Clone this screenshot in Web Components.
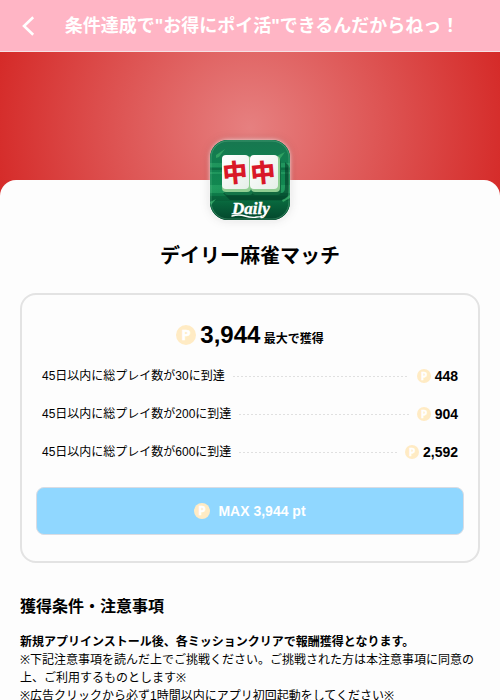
<!DOCTYPE html>
<html lang="ja">
<head>
<meta charset="UTF-8">
<meta name="viewport" content="width=device-width, initial-scale=1">
<title>デイリー麻雀マッチ</title>
<style>
  body {
    margin: 0;
    background: #fdfdfd;
    color: #000;
    font-family: "Liberation Sans", "Noto Sans", "Open Sans", "Noto Sans CJK JP", sans-serif;
    font-size: 12px;
    line-height: 18px;
  }
</style>
</head>
<body>
<offer-page>
  <app-bar slot="bar">条件達成で"お得にポイ活"できるんだからねっ！</app-bar>
  <app-icon slot="icon"></app-icon>
  <span slot="name">デイリー麻雀マッチ</span>
  <reward-card total="3,944">
    <reward-row points="448">45日以内に総プレイ数が30に到達</reward-row>
    <reward-row points="904">45日以内に総プレイ数が200に到達</reward-row>
    <reward-row points="2,592">45日以内に総プレイ数が600に到達</reward-row>
  </reward-card>
  <offer-notes heading="獲得条件・注意事項">
    <strong>新規アプリインストール後、各ミッションクリアで報酬獲得となります。</strong><br>
    ※下記注意事項を読んだ上でご挑戦ください。ご挑戦された方は本注意事項に同意の上、ご利用するものとします※<br>
    ※広告クリックから必ず1時間以内にアプリ初回起動をしてください※
  </offer-notes>
</offer-page>

<script>
class OfferPage extends HTMLElement {
  constructor() {
    super();
    this.attachShadow({ mode: "open" });
  }

  connectedCallback() {
    this.shadowRoot.innerHTML = `
      <style>
        :host { display: block; }
        .hero {
          height: 152px;
          background: radial-gradient(circle, #e68080, #d52a28);
        }
        main {
          display: flex;
          flex-direction: column;
          position: relative;
          margin-top: -24px;
          padding: 0 20px 20px;
          border-radius: 16px 16px 0 0;
          background: #fdfdfd;
        }
        ::slotted(app-icon) {
          align-self: center;
          margin-top: -41px;
        }
        h1 {
          margin: 20px 0 22px;
          font-size: 20px;
          line-height: 30px;
          text-align: center;
        }
      </style>
      <slot name="bar"></slot>
      <div class="hero"></div>
      <main>
        <slot name="icon"></slot>
        <h1><slot name="name"></slot></h1>
        <slot></slot>
      </main>
    `;
  }
}
customElements.define("offer-page", OfferPage);

class AppBar extends HTMLElement {
  constructor() {
    super();
    this.attachShadow({ mode: "open" });
  }

  connectedCallback() {
    this.shadowRoot.innerHTML = `
      <style>
        :host { display: block; }
        header {
          display: grid;
          grid-template-columns: 56px 1fr 32px;
          align-items: center;
          height: 51px;
          border-bottom: 1px solid #f5e1e5;
          background: #ffb5c5;
          color: #fff;
        }
        button {
          display: flex;
          justify-content: center;
          align-items: center;
          height: 51px;
          padding: 0;
          border: 0;
          background: none;
          color: inherit;
          cursor: pointer;
        }
        h2 {
          margin: 0;
          font-size: 18px;
          line-height: 26px;
          text-align: center;
          white-space: nowrap;
        }
      </style>
      <header>
        <button type="button" aria-label="戻る">
          <svg width="14" height="20" viewBox="0 0 14 20" fill="none" stroke="currentColor" stroke-width="2.6">
            <path d="M12.2 1.2 3 10l9.2 8.8"/>
          </svg>
        </button>
        <h2><slot></slot></h2>
      </header>
    `;
  }
}
customElements.define("app-bar", AppBar);

class AppIcon extends HTMLElement {
  constructor() {
    super();
    this.attachShadow({ mode: "open" });
  }

  connectedCallback() {
    this.shadowRoot.innerHTML = `
      <style>
        :host { display: block; width: 80px; height: 82px; }
        svg { display: block; overflow: visible; }
        .glow { filter: drop-shadow(0 0 2px #ffffffcc) drop-shadow(0 0 4px #00000022); }
        .tile { font: 900 25px "Noto Sans CJK JP", sans-serif; }
        .logo { font: italic bold 17px "Liberation Serif", serif; }
      </style>
      <svg width="80" height="82" viewBox="0 0 80 82">
        <defs>
          <linearGradient id="felt" x1="0" y1="0" x2="0" y2="1">
            <stop offset="0" stop-color="#187650"/>
            <stop offset=".3" stop-color="#11804f"/>
            <stop offset=".6" stop-color="#128951"/>
            <stop offset=".78" stop-color="#08653c"/>
            <stop offset="1" stop-color="#03452b"/>
          </linearGradient>
          <linearGradient id="streak">
            <stop offset="0" stop-color="#38b873"/>
            <stop offset=".5" stop-color="#22965f"/>
            <stop offset="1" stop-color="#3ab977"/>
          </linearGradient>
          <linearGradient id="face" x1="0" y1="0" x2="1" y2="1">
            <stop offset="0" stop-color="#fff"/>
            <stop offset="1" stop-color="#e5efe8"/>
          </linearGradient>
          <clipPath id="shape"><rect y="1" width="80" height="80" rx="18"/></clipPath>
        </defs>
        <rect class="glow" y="1" width="80" height="80" rx="18" fill="#08653c"/>
        <g clip-path="url(#shape)">
          <rect width="80" height="82" fill="url(#felt)"/>
          <path fill="url(#streak)" opacity=".4" d="M0 24h80v4H0zM0 33h80v2H0zM0 46h80v8H0z"/>
          <path fill="#04502f" opacity=".4" d="M0 29h80v2H0zM0 57h80v5H0z"/>
          <path fill="#2fa061" d="M6 16l9-6-6 8-3 1zM67 17l8-4-5 7zM0 63l6-3-5 6zM72 61l8-5v3l-7 4z"/>
          <path d="M13 54h58q4 0 4-6V23l4 4v23q0 11-8 11H20z" fill="#023c26" opacity=".6"/>
          <rect x="14" y="20" width="29" height="36" rx="4" fill="#147548"/>
          <rect x="42" y="20" width="29" height="36" rx="4" fill="#11683f"/>
          <rect x="12" y="17" width="29" height="36" rx="4" fill="#91ce93"/>
          <rect x="41" y="17" width="29" height="36" rx="4" fill="#91ce93"/>
          <rect x="12" y="16" width="27" height="34" rx="4" fill="url(#face)"/>
          <rect x="40" y="16" width="28" height="34" rx="4" fill="url(#face)"/>
          <g class="tile" fill="#d91827" text-anchor="middle">
            <text x="25" y="43" transform="rotate(-5 25 34)">中</text>
            <text x="53" y="43" transform="rotate(-5 53 34)">中</text>
          </g>
          <text class="logo" x="22" y="75" fill="#fff" stroke="#fff" stroke-width=".4">Daily</text>
          <path d="M22 77q7-2 13 0t12 1q7 0 9-4" fill="none" stroke="#fff" stroke-width="1.4" stroke-linecap="round"/>
        </g>
        <rect x="1" y="2" width="78" height="78" rx="17" fill="none" stroke="#72c397" stroke-opacity=".4"/>
      </svg>
    `;
  }
}
customElements.define("app-icon", AppIcon);

class PointCoin extends HTMLElement {
  constructor() {
    super();
    this.attachShadow({ mode: "open" });
  }

  connectedCallback() {
    this.shadowRoot.innerHTML = `
      <style>
        :host { display: block; flex: none; width: 14px; height: 14px; }
        svg { display: block; width: 100%; height: 100%; }
        text { font: bold 15px "Open Sans", sans-serif; }
      </style>
      <svg viewBox="0 0 20 20">
        <circle cx="10" cy="10" r="10" fill="#ffebc4"/>
        <text x="10" y="15" fill="#fff" stroke="#fff" stroke-width=".5" text-anchor="middle">P</text>
      </svg>
    `;
  }
}
customElements.define("point-coin", PointCoin);

class RewardCard extends HTMLElement {
  constructor() {
    super();
    this.attachShadow({ mode: "open" });
  }

  connectedCallback() {
    const total = this.getAttribute("total");

    this.shadowRoot.innerHTML = `
      <style>
        :host {
          display: block;
          padding: 22px 14px 26px;
          border: 2px solid #e3e3e3;
          border-radius: 16px;
        }
        .total {
          display: flex;
          justify-content: center;
          align-items: center;
          gap: 4px;
          height: 36px;
        }
        .total point-coin { width: 20px; height: 20px; }
        .total p { margin: 4px 0 0; font-weight: bold; line-height: 36px; }
        .total b { font-size: 24px; }
        .rows {
          display: grid;
          gap: 20px;
          padding: 14px 6px 26px;
        }
        button {
          display: flex;
          justify-content: center;
          align-items: center;
          gap: 8px;
          width: 100%;
          height: 48px;
          border: 1px solid #d9dce3;
          border-radius: 8px;
          background: #90d7ff;
          color: #fff;
          font: bold 14px "Liberation Sans", sans-serif;
          cursor: pointer;
        }
        button point-coin { width: 16px; height: 16px; }
      </style>
      <div class="total">
        <point-coin></point-coin>
        <p><b>${total}</b> 最大で獲得</p>
      </div>
      <div class="rows"><slot></slot></div>
      <button type="button"><point-coin></point-coin>MAX ${total} pt</button>
    `;
  }
}
customElements.define("reward-card", RewardCard);

class RewardRow extends HTMLElement {
  constructor() {
    super();
    this.attachShadow({ mode: "open" });
  }

  connectedCallback() {
    const points = this.getAttribute("points");

    this.shadowRoot.innerHTML = `
      <style>
        :host { display: flex; align-items: center; height: 18px; }
        .line {
          flex: 1;
          height: 1px;
          margin: 0 8px;
          background: repeating-linear-gradient(90deg, #e0e0e0 0 2px, transparent 2px 4px);
        }
        b { margin-left: 4px; font-size: 14px; }
      </style>
      <span><slot></slot></span>
      <span class="line"></span>
      <point-coin></point-coin>
      <b>${points}</b>
    `;
  }
}
customElements.define("reward-row", RewardRow);

class OfferNotes extends HTMLElement {
  constructor() {
    super();
    this.attachShadow({ mode: "open" });
  }

  connectedCallback() {
    this.shadowRoot.innerHTML = `
      <style>
        :host { display: block; margin-top: 32px; }
        h3 { margin: 0 0 14px; font-size: 16px; line-height: 24px; }
        p { margin: 0; }
      </style>
      <h3>${this.getAttribute("heading")}</h3>
      <p><slot></slot></p>
    `;
  }
}
customElements.define("offer-notes", OfferNotes);
</script>
</body>
</html>
